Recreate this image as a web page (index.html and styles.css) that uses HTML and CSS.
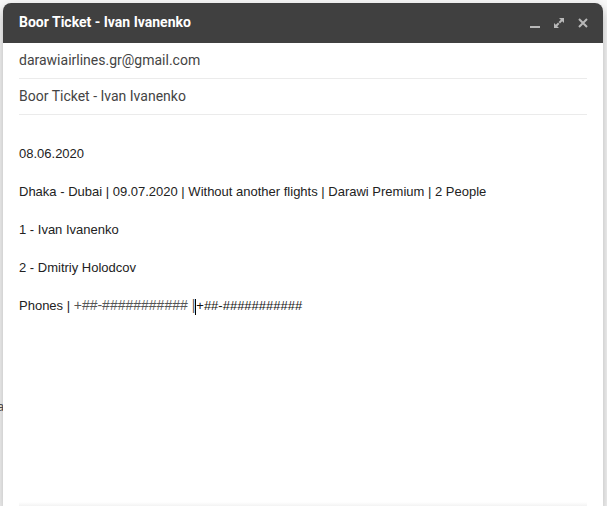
FILE: index.html
```html
<!DOCTYPE html>
<html lang="en">
<head>
<meta charset="utf-8">
<title>Compose</title>
<link rel="stylesheet" href="styles.css">
</head>
<body>
<span class="behind" aria-hidden="true">a</span>
<form class="compose">
  <header class="titlebar">
    <h1 class="title">Boor Ticket - Ivan Ivanenko</h1>
    <div class="actions">
      <button class="action" type="button" aria-label="Minimize"><svg viewBox="0 0 12 12"><path d="M1 9h10v2H1z"/></svg></button>
      <button class="action" type="button" aria-label="Full screen"><svg viewBox="0 0 12 12"><path d="M6 1h5v5L9.200 4.200 7 6.400 5.600 5 7.800 2.800zM1 6l1.800 1.800L5 5.600 6.400 7 4.200 9.200 6 11H1z"/></svg></button>
      <button class="action" type="button" aria-label="Close"><svg viewBox="0 0 12 12"><path class="cross" d="M2 2l8 8M10 2l-8 8"/></svg></button>
    </div>
  </header>
  <div class="fields">
    <input class="field" type="email" aria-label="To" value="darawiairlines.gr@gmail.com">
    <input class="field" type="text" aria-label="Subject" value="Boor Ticket - Ivan Ivanenko">
  </div>
  <div class="message" role="textbox" aria-multiline="true" aria-label="Message body" contenteditable="true" spellcheck="false">
    <p>08.06.2020</p>
    <p>Dhaka - Dubai | 09.07.2020 | Without another flights | Darawi Premium | 2 People</p>
    <p>1 - Ivan Ivanenko</p>
    <p>2 - Dmitriy Holodcov</p>
    <p>Phones | <span class="phone">+##-########### |</span><span class="caret"></span><span class="current">+##-###########</span></p>
  </div>
  <div class="bottom-edge"></div>
</form>
</body>
</html>
```
FILE: styles.css
```css
* {
  box-sizing: border-box;
}

body {
  margin: 0;
  padding: 3px 4px 0 3px;
  min-height: 100vh;
  display: flex;
  background: #fafafa;
  font-family: Roboto, "Liberation Sans", sans-serif;
  overflow: hidden;
}

.behind {
  position: absolute;
  left: -3px;
  top: 399px;
  color: #555;
  font: 13px/16px "Liberation Sans", sans-serif;
}

.compose {
  position: relative;
  flex: 1;
  min-width: 0;
  display: flex;
  flex-direction: column;
  background: #fff;
  border-radius: 8px 8px 0 0;
  box-shadow: 0 8px 10px 1px rgba(0, 0, 0, 0.14), 0 3px 14px 2px rgba(0, 0, 0, 0.12);
}

.titlebar {
  height: 40px;
  padding: 0 14px 2px 16px;
  display: flex;
  align-items: center;
  justify-content: space-between;
  background: #404040;
  border-radius: 8px 8px 0 0;
}

.title {
  margin: 0;
  color: #fff;
  font-size: 14px;
  font-weight: 700;
}

.actions {
  display: flex;
  gap: 12px;
  padding-top: 2px;
}

.action {
  width: 12px;
  height: 12px;
  padding: 0;
  border: 0;
  background: none;
}

.action svg {
  display: block;
  width: 12px;
  height: 12px;
  fill: #b8b8b8;
}

.action .cross {
  stroke: #b8b8b8;
  stroke-width: 2;
}

.fields {
  padding: 0 16px;
}

.field {
  display: block;
  width: 100%;
  height: 36px;
  padding: 0 0 2px;
  border: 0;
  border-bottom: 1px solid #ebebeb;
  outline: 0;
  background: none;
  color: #444;
  font: 14px/20px Roboto, "Liberation Sans", sans-serif;
}

.message {
  flex: 1;
  padding: 29px 16px 0;
  outline: 0;
  color: #222;
  font: 13px/19px "Liberation Sans", Arial, sans-serif;
}

.message p {
  margin: 0 0 19px;
}

.phone {
  color: #555;
  font-size: 14px;
}

.caret {
  display: inline-block;
  width: 1px;
  height: 16px;
  background: #000;
  vertical-align: middle;
}

.current {
  color: #111;
}

.bottom-edge {
  height: 4px;
  margin: 0 16px;
  background: linear-gradient(#fff, #f3f3f3);
}
```
